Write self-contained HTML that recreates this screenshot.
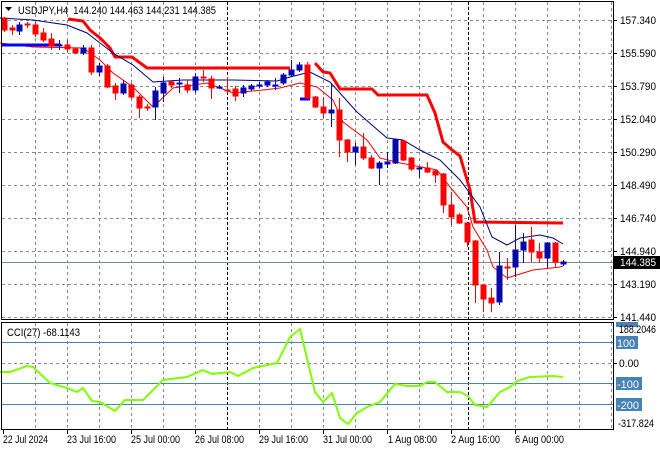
<!DOCTYPE html>
<html><head><meta charset="utf-8"><style>
html,body{margin:0;padding:0;background:#fff;}
svg{display:block;font-family:"Liberation Sans",sans-serif;font-size:11px;}
</style></head><body>
<svg width="660" height="450" viewBox="0 0 660 450" xmlns="http://www.w3.org/2000/svg">
<rect width="660" height="450" fill="#fff"/>
<g stroke="#7f8a96" stroke-width="1" stroke-dasharray="3,3" fill="none">
<path d="M2 20.5H613M2 53.5H613M2 86.5H613M2 119.5H613M2 152.5H613M2 185.5H613M2 218.5H613M2 251.5H613M2 284.5H613M2 317.5H613"/>
<path d="M35.5 2V319M67.5 2V319M99.5 2V319M131.5 2V319M163.5 2V319M195.5 2V319M259.5 2V319M291.5 2V319M323.5 2V319M355.5 2V319M387.5 2V319M419.5 2V319M451.5 2V319M483.5 2V319M515.5 2V319M547.5 2V319M579.5 2V319M611.5 2V319"/>
<path d="M35.5 323V429M67.5 323V429M99.5 323V429M131.5 323V429M163.5 323V429M195.5 323V429M259.5 323V429M291.5 323V429M323.5 323V429M355.5 323V429M387.5 323V429M419.5 323V429M451.5 323V429M483.5 323V429M515.5 323V429M547.5 323V429M579.5 323V429M611.5 323V429"/>
<path d="M2 363.5H613"/>
</g>
<g stroke="#000" stroke-dasharray="3,2"><path d="M227.5 2V429M468.5 2V429"/></g>
<g stroke="#4682b4"><path d="M2 342.5H613M2 383.5H613M2 404.5H613"/></g>
<path d="M2 262.5H613" stroke="#7f8a96"/>
<polyline fill="none" stroke="#ff0000" stroke-width="3" points="68,19 83,21 90,30 100,38 110,48 115,57 132,57 147,68 290,68"/>
<polyline fill="none" stroke="#ff0000" stroke-width="3" points="315,63 323,72 330,73 340,89 372,89 378,95 427,95 435,113 443,142 452,150 460,156 470,190 475,222 563,223"/>
<polyline fill="none" stroke="#000080" stroke-width="1" points="0,18 33,20 67,25 87,33 100,43 113,53 133,65 153,82 183,80 233,80 277,81 290,77 310,72 330,82 357,112 387,138 403,140 420,150 440,160 460,180 480,207 492,237 507,245 520,238 540,235 553,238 563,244"/>
<polyline fill="none" stroke="#ff0000" stroke-width="1" points="0,43 33,47 83,48 100,60 113,73 133,87 153,107 173,88 207,83 233,93 263,90 280,88 300,83 317,87 333,100 343,122 367,140 380,158 400,163 437,170 450,187 467,207 473,227 487,250 493,267 507,278 533,270 560,267 563,266"/>
<path d="M2 45H61M300 99H310" stroke="#0000ff" stroke-width="3"/>
<g stroke="#ff0000" fill="#ff0000">
<path d="M4.5 17V32M12.5 25V35M27.5 22V28M35.5 22V37M43.5 28V42M51.5 33V50M67.5 40V52M75.5 48V54M91.5 45V75M107.5 64V88M115.5 83V100M131.5 83V99M139.5 95V118M147.5 104V111M171.5 80V88M187.5 80V93M203.5 70V82M211.5 76V99M227.5 77V93M235.5 86V101M307.5 62V99M315.5 96V108M323.5 97V118M339.5 98V157M347.5 139V162M363.5 133V160M371.5 155V169M403.5 140V161M411.5 157V171M427.5 162V173M435.5 170V183M443.5 173V213M451.5 192V225M459.5 213V224M467.5 222V247M475.5 240V303M483.5 284V312M491.5 288V312M507.5 258V280M531.5 227V262M539.5 243V263M555.5 242V267"/>
<rect x="2" y="18" width="5" height="12"/><rect x="10" y="28" width="5" height="2"/><rect x="25" y="24" width="5" height="1"/><rect x="33" y="25" width="5" height="9"/><rect x="41" y="33" width="5" height="7"/><rect x="49" y="39" width="5" height="7"/><rect x="65" y="45" width="5" height="4"/><rect x="73" y="49" width="5" height="4"/><rect x="89" y="48" width="5" height="24"/><rect x="105" y="66" width="5" height="21"/><rect x="113" y="86" width="5" height="7"/><rect x="129" y="85" width="5" height="12"/><rect x="137" y="97" width="5" height="11"/><rect x="145" y="107" width="5" height="1"/><rect x="169" y="82" width="5" height="3"/><rect x="185" y="85" width="5" height="5"/><rect x="201" y="77" width="5" height="1"/><rect x="209" y="79" width="5" height="9"/><rect x="225" y="90" width="5" height="1"/><rect x="233" y="89" width="5" height="7"/><rect x="305" y="65" width="5" height="33"/><rect x="313" y="97" width="5" height="10"/><rect x="321" y="107" width="5" height="6"/><rect x="337" y="110" width="5" height="30"/><rect x="345" y="140" width="5" height="12"/><rect x="361" y="147" width="5" height="11"/><rect x="369" y="158" width="5" height="10"/><rect x="401" y="141" width="5" height="19"/><rect x="409" y="158" width="5" height="11"/><rect x="425" y="168" width="5" height="4"/><rect x="433" y="171" width="5" height="4"/><rect x="441" y="174" width="5" height="31"/><rect x="449" y="205" width="5" height="12"/><rect x="457" y="215" width="5" height="8"/><rect x="465" y="223" width="5" height="19"/><rect x="473" y="241" width="5" height="44"/><rect x="481" y="285" width="5" height="14"/><rect x="489" y="298" width="5" height="5"/><rect x="505" y="267" width="5" height="1"/><rect x="529" y="240" width="5" height="12"/><rect x="537" y="252" width="5" height="6"/><rect x="553" y="243" width="5" height="19"/>
</g>
<g stroke="#0000c8" fill="#0a0a96">
<path d="M19.5 22V35M59.5 40V50M83.5 45V55M99.5 63V76M123.5 80V95M155.5 87V120M163.5 77V102M179.5 78V93M195.5 73V93M219.5 85V89M243.5 85V97M251.5 84V91M259.5 82V88M267.5 80V87M275.5 78V90M283.5 73V85M291.5 60V76M299.5 62V72M331.5 83V127M355.5 143V165M379.5 161V185M387.5 152V168M395.5 139V164M419.5 167V178M499.5 252V305M515.5 225V277M523.5 233V263M547.5 242V268M563.5 260V266"/>
<rect x="17" y="25" width="5" height="6"/><rect x="57" y="45" width="5" height="1"/><rect x="81" y="48" width="5" height="5"/><rect x="97" y="66" width="5" height="6"/><rect x="121" y="84" width="5" height="9"/><rect x="153" y="91" width="5" height="16"/><rect x="161" y="83" width="5" height="10"/><rect x="177" y="83" width="5" height="1"/><rect x="193" y="77" width="5" height="13"/><rect x="217" y="87" width="5" height="1"/><rect x="241" y="88" width="5" height="5"/><rect x="249" y="86" width="5" height="3"/><rect x="257" y="85" width="5" height="1"/><rect x="265" y="82" width="5" height="3"/><rect x="273" y="85" width="5" height="1"/><rect x="281" y="75" width="5" height="8"/><rect x="289" y="70" width="5" height="5"/><rect x="297" y="65" width="5" height="5"/><rect x="329" y="110" width="5" height="3"/><rect x="353" y="147" width="5" height="5"/><rect x="377" y="163" width="5" height="5"/><rect x="385" y="162" width="5" height="2"/><rect x="393" y="140" width="5" height="23"/><rect x="417" y="168" width="5" height="1"/><rect x="497" y="266" width="5" height="36"/><rect x="513" y="250" width="5" height="17"/><rect x="521" y="242" width="5" height="8"/><rect x="545" y="243" width="5" height="15"/><rect x="561" y="262" width="5" height="2"/>
</g>
<polyline fill="none" stroke="#7fff00" stroke-width="2" points="0,372 10,372 27,366 33,367 50,383 67,388 77,392 83,388 92,401 100,402 115,411 125,400 143,400 163,380 187,377 203,370 212,374 230,372 238,376 253,368 277,363 290,337 300,329 315,392 323,402 332,393 340,418 348,424 357,413 367,407 380,402 395,384 407,386 420,386 427,382 435,382 447,392 460,392 468,396 475,405 487,407 500,392 510,387 517,381 530,377 553,376 563,377"/>
<rect x="1.5" y="1.5" width="612" height="318" fill="none" stroke="#000"/>
<rect x="1.5" y="322.5" width="612" height="107" fill="none" stroke="#000"/>
<g stroke="#000"><path d="M613 20.5h4M613 53.5h4M613 86.5h4M613 119.5h4M613 152.5h4M613 185.5h4M613 218.5h4M613 251.5h4M613 284.5h4M613 317.5h4M613 363.5h4M3.5 430v4M67.5 430v4M131.5 430v4M195.5 430v4M259.5 430v4M323.5 430v4M387.5 430v4M451.5 430v4M515.5 430v4"/></g>
<path d="M5 7h7l-3.5 4z" fill="#000"/>
<text x="18" y="14" fill="#000" xml:space="preserve" textLength="198" lengthAdjust="spacingAndGlyphs">USDJPY,H4  144.240 144.463 144.231 144.385</text>
<text x="7" y="336" fill="#000" textLength="73" lengthAdjust="spacingAndGlyphs">CCI(27) -68.1143</text>
<g fill="#000">
<text x="620" y="24" textLength="36" lengthAdjust="spacingAndGlyphs">157.340</text><text x="620" y="57" textLength="36" lengthAdjust="spacingAndGlyphs">155.590</text><text x="620" y="90" textLength="36" lengthAdjust="spacingAndGlyphs">153.790</text><text x="620" y="123" textLength="36" lengthAdjust="spacingAndGlyphs">152.040</text><text x="620" y="156" textLength="36" lengthAdjust="spacingAndGlyphs">150.290</text><text x="620" y="189" textLength="36" lengthAdjust="spacingAndGlyphs">148.490</text><text x="620" y="222" textLength="36" lengthAdjust="spacingAndGlyphs">146.740</text><text x="620" y="255" textLength="36" lengthAdjust="spacingAndGlyphs">144.940</text><text x="620" y="288" textLength="36" lengthAdjust="spacingAndGlyphs">143.190</text><text x="620" y="321" textLength="36" lengthAdjust="spacingAndGlyphs">141.440</text>
</g>
<rect x="614" y="256" width="46" height="13" fill="#000"/>
<text x="620" y="266" fill="#fff" textLength="36" lengthAdjust="spacingAndGlyphs">144.385</text>
<rect x="616" y="322" width="22" height="5" fill="#4682b4"/>
<text x="619" y="333" fill="#000" textLength="37" lengthAdjust="spacingAndGlyphs">188.2046</text>
<rect x="616" y="336" width="22" height="13" fill="#4682b4"/><text x="617" y="347" fill="#fff" textLength="18" lengthAdjust="spacingAndGlyphs">100</text>
<text x="619" y="367" fill="#000" textLength="20" lengthAdjust="spacingAndGlyphs">0.00</text>
<rect x="616" y="377" width="26" height="13" fill="#4682b4"/><text x="617" y="388" fill="#fff" textLength="22" lengthAdjust="spacingAndGlyphs">-100</text>
<rect x="616" y="398" width="26" height="13" fill="#4682b4"/><text x="617" y="409" fill="#fff" textLength="22" lengthAdjust="spacingAndGlyphs">-200</text>
<text x="618" y="427" fill="#000" textLength="36" lengthAdjust="spacingAndGlyphs">-317.824</text>
<g fill="#000">
<text x="3" y="443" textLength="45" lengthAdjust="spacingAndGlyphs">22 Jul 2024</text><text x="67" y="443" textLength="49" lengthAdjust="spacingAndGlyphs">23 Jul 16:00</text><text x="131" y="443" textLength="49" lengthAdjust="spacingAndGlyphs">25 Jul 00:00</text><text x="195" y="443" textLength="49" lengthAdjust="spacingAndGlyphs">26 Jul 08:00</text><text x="259" y="443" textLength="49" lengthAdjust="spacingAndGlyphs">29 Jul 16:00</text><text x="323" y="443" textLength="49" lengthAdjust="spacingAndGlyphs">31 Jul 00:00</text><text x="388" y="443" textLength="49" lengthAdjust="spacingAndGlyphs">1 Aug 08:00</text><text x="451" y="443" textLength="49" lengthAdjust="spacingAndGlyphs">2 Aug 16:00</text><text x="515" y="443" textLength="49" lengthAdjust="spacingAndGlyphs">6 Aug 00:00</text>
</g>
</svg>
</body></html>
